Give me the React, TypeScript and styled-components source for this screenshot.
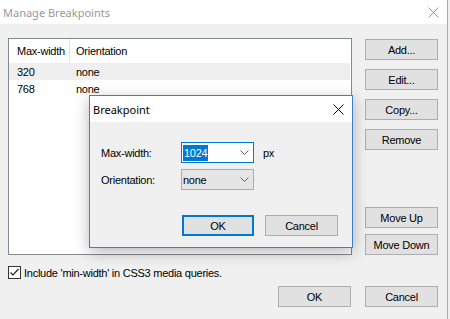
import styled, { createGlobalStyle } from 'styled-components';

const GlobalStyle = createGlobalStyle`
  html, body {
    margin: 0;
    padding: 0;
    background: #f0f0f0;
  }
  body {
    width: 450px;
    height: 319px;
    overflow: hidden;
    font-family: "Liberation Sans", Arial, sans-serif;
    font-size: 11px;
    letter-spacing: -0.25px;
    color: #000;
  }
`;

const Window = styled.div`
  position: relative;
  width: 447px;
  height: 319px;
  border-right: 1px solid #aaaaaa;
  background: #f0f0f0;
  display: flex;
  flex-direction: column;
`;

const TitleBar = styled.div<{ $active?: boolean; $height: number }>`
  height: ${({ $height }) => $height}px;
  flex-shrink: 0;
  background: #fff;
  display: flex;
  align-items: center;
  justify-content: space-between;
  padding: 0 8px 0 3px;
  font-family: "Noto Sans", "Open Sans", sans-serif;
  font-size: 11px;
  letter-spacing: 0;
  color: ${({ $active }) => ($active ? '#000' : '#999')};
`;

const Body = styled.div`
  display: flex;
  flex-direction: column;
  padding: 14px 9px 0 8px;
`;

const TopArea = styled.div`
  display: flex;
  gap: 13px;
  height: 217px;
`;

const ListView = styled.div`
  width: 342px;
  border: 1px solid #828790;
  background: #fff;
`;

const Row = styled.div<{ $header?: boolean; $selected?: boolean }>`
  display: flex;
  align-items: center;
  height: ${({ $header }) => ($header ? 24 : 17)}px;
  background: ${({ $selected }) => ($selected ? '#efefef' : '#fff')};
  margin-right: ${({ $header }) => ($header ? 0 : 1)}px;
`;

const Cell = styled.div<{ $width?: number; $divider?: boolean }>`
  width: ${({ $width }) => ($width ? `${$width}px` : 'auto')};
  flex: ${({ $width }) => ($width ? 'none' : 1)};
  padding-left: ${({ $width }) => ($width ? 8 : 6)}px;
  box-sizing: border-box;
  height: 100%;
  display: flex;
  align-items: center;
  border-right: ${({ $divider }) => ($divider ? '1px solid #e5e5e5' : 'none')};
`;

const ButtonColumn = styled.div`
  width: 73px;
  display: flex;
  flex-direction: column;
  gap: 9px;
  padding-top: 1px;
`;

const BottomGroup = styled.div`
  margin-top: auto;
  display: flex;
  flex-direction: column;
  gap: 6px;
`;

const Button = styled.button<{ $default?: boolean; $width?: number }>`
  width: ${({ $width }) => $width ?? 73}px;
  height: 21px;
  box-sizing: border-box;
  margin: 0;
  padding: 0;
  background: #e1e1e1;
  border: ${({ $default }) => ($default ? '2px solid #0078d7' : '1px solid #adadad')};
  font-family: "Liberation Sans", Arial, sans-serif;
  font-size: 11px;
  letter-spacing: -0.25px;
  color: #000;
  cursor: default;
`;

const CheckRow = styled.label`
  display: flex;
  align-items: center;
  gap: 3px;
  margin-top: 11px;
  height: 13px;
`;

const CheckBox = styled.span`
  width: 13px;
  height: 13px;
  box-sizing: border-box;
  border: 1px solid #333;
  background: #fff;
  display: flex;
  align-items: center;
  justify-content: center;
`;

const Footer = styled.div`
  display: flex;
  justify-content: flex-end;
  gap: 14px;
  margin-top: 7px;
`;

const Dialog = styled.div`
  position: absolute;
  left: 89px;
  top: 95px;
  width: 262px;
  height: 151px;
  border: 1px solid #3b7fc4;
  background: #f0f0f0;
  box-shadow: 0 4px 14px rgba(0, 0, 0, 0.28);
  display: flex;
  flex-direction: column;
`;

const DialogBody = styled.div`
  padding: 20px 14px 0 11px;
  display: flex;
  flex-direction: column;
`;

const FormGrid = styled.div`
  display: grid;
  grid-template-columns: 71px 73px auto;
  grid-auto-rows: 21px;
  column-gap: 9px;
  row-gap: 6px;
  align-items: center;
`;

const Combo = styled.div<{ $focused?: boolean }>`
  height: 21px;
  box-sizing: border-box;
  border: 1px solid ${({ $focused }) => ($focused ? '#0078d7' : '#acacac')};
  background: ${({ $focused }) => ($focused ? '#fff' : '#e5e5e5')};
  display: flex;
  align-items: center;
  justify-content: space-between;
  padding: 0 4px 0 1px;
`;

const Selected = styled.span`
  background: #0078d7;
  color: #fff;
  line-height: 16px;
  padding: 0 1px;
`;

const DialogButtons = styled.div`
  display: flex;
  justify-content: flex-end;
  gap: 11px;
  margin-top: 25px;
`;

const Close = ({ color }: { color: string }) => (
  <svg width="11" height="11" viewBox="0 0 11 11">
    <path d="M0.5 0.5 L10.5 10.5 M10.5 0.5 L0.5 10.5" stroke={color} strokeWidth="1" fill="none" />
  </svg>
);

const Chevron = () => (
  <svg width="9" height="5" viewBox="0 0 9 5">
    <polyline points="0.5,0.5 4.5,4.5 8.5,0.5" stroke="#606060" strokeWidth="1" fill="none" />
  </svg>
);

const rows = [
  { width: '320', orientation: 'none' },
  { width: '768', orientation: 'none' },
];

export default function App() {
  return (
    <>
      <GlobalStyle />
      <Window>
        <TitleBar $height={24}>
          <span>Manage Breakpoints</span>
          <Close color="#999" />
        </TitleBar>

        <Body>
          <TopArea>
            <ListView>
              <Row $header>
                <Cell $width={61} $divider>Max-width</Cell>
                <Cell>Orientation</Cell>
              </Row>
              {rows.map((r, i) => (
                <Row key={r.width} $selected={i === 0}>
                  <Cell $width={61}>{r.width}</Cell>
                  <Cell>{r.orientation}</Cell>
                </Row>
              ))}
            </ListView>

            <ButtonColumn>
              <Button>Add...</Button>
              <Button>Edit...</Button>
              <Button>Copy...</Button>
              <Button>Remove</Button>
              <BottomGroup>
                <Button>Move Up</Button>
                <Button>Move Down</Button>
              </BottomGroup>
            </ButtonColumn>
          </TopArea>

          <CheckRow>
            <CheckBox>
              <svg width="11" height="11" viewBox="0 0 11 11">
                <polyline points="1.5,5.5 4,8 9.5,2" stroke="#222" strokeWidth="1.2" fill="none" />
              </svg>
            </CheckBox>
            Include 'min-width' in CSS3 media queries.
          </CheckRow>

          <Footer>
            <Button>OK</Button>
            <Button>Cancel</Button>
          </Footer>
        </Body>

        <Dialog>
          <TitleBar $active $height={26}>
            <span>Breakpoint</span>
            <Close color="#000" />
          </TitleBar>
          <DialogBody>
            <FormGrid>
              <span>Max-width:</span>
              <Combo $focused>
                <Selected>1024</Selected>
                <Chevron />
              </Combo>
              <span>px</span>
              <span>Orientation:</span>
              <Combo>
                <span>none</span>
                <Chevron />
              </Combo>
            </FormGrid>
            <DialogButtons>
              <Button $default $width={72}>OK</Button>
              <Button $width={73}>Cancel</Button>
            </DialogButtons>
          </DialogBody>
        </Dialog>
      </Window>
    </>
  );
}
